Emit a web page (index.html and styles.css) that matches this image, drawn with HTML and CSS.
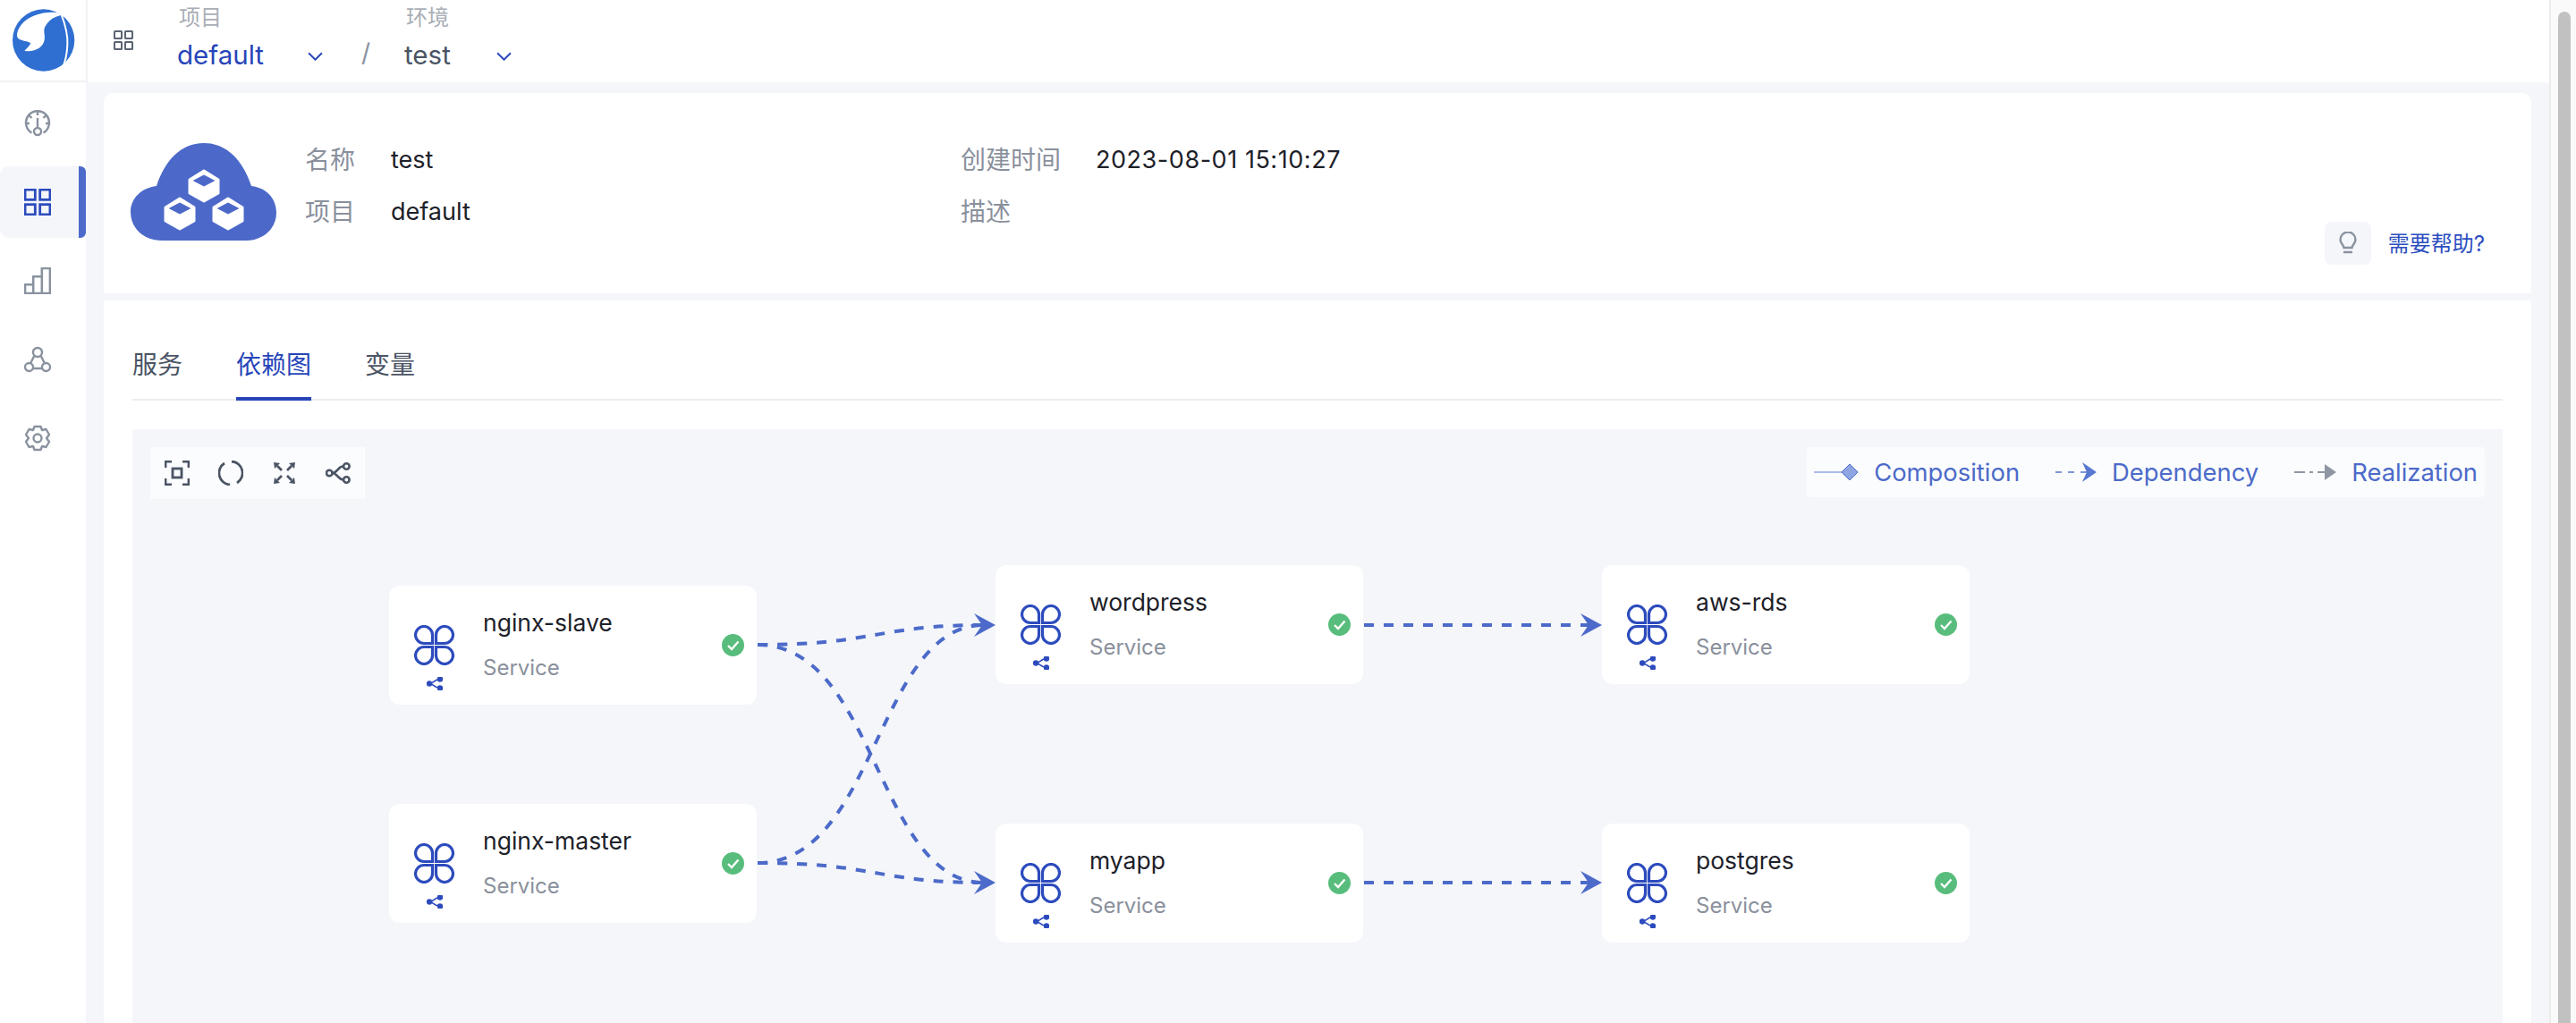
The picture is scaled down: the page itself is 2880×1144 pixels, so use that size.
FILE: index.html
```html
<!DOCTYPE html>
<html lang="zh-CN">
<head>
    <meta charset="UTF-8">
    <title>test</title>
    <link rel="stylesheet" href="styles.css">
</head>
<body>
    <svg class="icon-defs" width="0" height="0">
        <defs>
            <symbol id="icon-apps" viewBox="0 0 22 22">
                <rect x="1" y="1" width="8" height="8" rx="0.5"/>
                <rect x="13" y="1" width="8" height="8" rx="0.5"/>
                <rect x="1" y="13" width="8" height="8" rx="0.5"/>
                <rect x="13" y="13" width="8" height="8" rx="0.5"/>
            </symbol>
            <symbol id="icon-clover" viewBox="0 0 45 45">
                <path d="M20.500 20.500H11A9.500 9.500 0 1 1 20.500 11Z"/>
                <path d="M24.500 20.500H34A9.500 9.500 0 1 0 24.500 11Z"/>
                <path d="M20.500 24.500H11A9.500 9.500 0 1 0 20.500 34Z"/>
                <path d="M24.500 24.500H34A9.500 9.500 0 1 1 24.500 34Z"/>
            </symbol>
            <symbol id="icon-tree" viewBox="0 0 18 15">
                <path d="M3 7.500C8 7.500 8 2.500 15 2.500M3 7.500C8 7.500 8 12.500 15 12.500"/>
                <circle cx="3" cy="7.500" r="2.500"/>
                <circle cx="15" cy="2.500" r="2.500"/>
                <circle cx="15" cy="12.500" r="2.500"/>
            </symbol>
            <symbol id="icon-ok" viewBox="0 0 25 25">
                <circle cx="12.500" cy="12.500" r="12.500" fill="#58bd7c"/>
                <path d="M7 13l4 4 7.500-8.500" fill="none" stroke="#fff" stroke-width="2.400"/>
            </symbol>
            <symbol id="icon-cube" viewBox="0 0 36 38">
                <path class="cube-body" d="M18 2L34 12V27L18 36L2 27V12Z"/>
                <path class="cube-top" d="M18 7L29.500 13L18 19L6.500 13Z"/>
            </symbol>
        </defs>
    </svg>

    <div class="app">
        <aside class="sidebar">
            <div class="logo">
                <svg width="96" height="92" viewBox="0 0 288 276">
                    <circle cx="146" cy="135" r="104" fill="#2f6fd2"/>
                    <path d="M190 42C150 38 95 50 70 85C58 102 52 122 62 130C75 138 92 138 103 145C98 155 90 163 82 170C105 176 135 168 147 142C155 120 142 105 152 88C160 74 172 62 188 56L207 50Z" fill="#fff"/>
                    <path d="M186 34L205 46C218 80 228 120 226 150C225 185 218 210 208 232" fill="none" stroke="#fff" stroke-width="6"/>
                </svg>
            </div>
            <nav class="nav">
                <a class="nav-item">
                    <svg class="nav-icon" viewBox="0 0 30 30">
                        <path d="M8.500 25.500A13 13 0 1 1 21.500 25.500"/>
                        <path d="M15 2v4M15 9v10M2 15h4M24 15h4M5.500 6l3 3M24.500 6l-3 3"/>
                        <circle cx="15" cy="24" r="4"/>
                    </svg>
                </a>
                <a class="nav-item active">
                    <svg class="nav-icon" viewBox="0 0 28 28">
                        <rect x="1" y="1" width="10.500" height="10.500"/>
                        <rect x="16.500" y="1" width="10.500" height="10.500"/>
                        <rect x="1" y="16.500" width="10.500" height="10.500"/>
                        <rect x="16.500" y="16.500" width="10.500" height="10.500"/>
                    </svg>
                </a>
                <a class="nav-item">
                    <svg class="nav-icon" viewBox="0 0 28 28">
                        <path d="M1 27V18H9.500V27ZM9.500 27V9.500H18.500V27ZM18.500 27V1H27V27ZM1 27H27"/>
                    </svg>
                </a>
                <a class="nav-item">
                    <svg class="nav-icon" viewBox="0 0 30 28">
                        <circle cx="15" cy="6" r="5"/>
                        <circle cx="5.500" cy="22.500" r="4.500"/>
                        <circle cx="24.500" cy="22.500" r="4.500"/>
                        <path d="M11.500 9.500L7 18.500M18.500 9.500L23 18.500M10 24H20"/>
                    </svg>
                </a>
                <a class="nav-item">
                    <svg class="nav-icon round" viewBox="0 0 30 30">
                        <path d="M11.500 2H18.500L20 6L24.500 5L28 11L25 15L28 19L24.500 25L20 24L18.500 28H11.500L10 24L5.500 25L2 19L5 15L2 11L5.500 5L10 6Z"/>
                        <circle cx="15" cy="15" r="4.500"/>
                    </svg>
                </a>
            </nav>
        </aside>

        <div class="main">
            <header class="topbar">
                <svg class="apps-icon"><use href="#icon-apps"/></svg>
                <div class="picker picker-project">
                    <span class="picker-label">项目</span>
                    <div class="picker-value current">
                        <span>default</span>
                        <svg class="chevron" viewBox="0 0 16 9"><path d="M1 1l7 7 7-7"/></svg>
                    </div>
                </div>
                <span class="slash">/</span>
                <div class="picker picker-env">
                    <span class="picker-label">环境</span>
                    <div class="picker-value">
                        <span>test</span>
                        <svg class="chevron" viewBox="0 0 16 9"><path d="M1 1l7 7 7-7"/></svg>
                    </div>
                </div>
            </header>

            <div class="content">
                <section class="card info-card">
                    <svg class="env-logo" viewBox="6 10 164 110">
                        <path class="cloud" d="M42 119C20 119 6 105 6 87C6 72 18 60 35 58C44 30 62 10 88 10C114 10 132 30 141 58C158 60 169 72 169 88C169 105 155 119 135 119Z"/>
                        <use href="#icon-cube" x="70" y="39" width="36" height="38"/>
                        <use href="#icon-cube" x="43" y="70" width="36" height="38"/>
                        <use href="#icon-cube" x="97" y="70" width="36" height="38"/>
                    </svg>
                    <dl class="info-grid">
                        <dt>名称</dt><dd>test</dd>
                        <dt>创建时间</dt><dd class="date">2023-08-01 15:10:27</dd>
                        <dt>项目</dt><dd>default</dd>
                        <dt>描述</dt><dd></dd>
                    </dl>
                    <div class="help">
                        <span class="help-icon">
                            <svg width="20" height="26" viewBox="0 0 20 26">
                                <path d="M5.500 18C5 14.500 1.500 13 1.500 9A8.500 8.500 0 0 1 18.500 9C18.500 13 15 14.500 14.500 18Z"/>
                                <path d="M5 23H15"/>
                            </svg>
                        </span>
                        <a class="help-link">需要帮助?</a>
                    </div>
                </section>

                <section class="card detail-card">
                    <div class="tabs">
                        <a class="tab">服务</a>
                        <a class="tab active">依赖图</a>
                        <a class="tab">变量</a>
                    </div>

                    <div class="canvas">
                        <svg class="edges" viewBox="148 480 2650 664" width="2650" height="664">
                            <g class="edge-lines">
                                <path d="M847 721C980 721 980 699 1100 699"/>
                                <path d="M847 721C980 721 980 987 1100 987"/>
                                <path d="M847 965C980 965 980 699 1100 699"/>
                                <path d="M847 965C980 965 980 987 1100 987"/>
                                <path d="M1525 699H1778"/>
                                <path d="M1525 987H1778"/>
                            </g>
                            <g class="edge-arrows">
                                <path d="M1113 699L1089 686L1098 699L1089 712Z"/>
                                <path d="M1113 987L1089 974L1098 987L1089 1000Z"/>
                                <path d="M1791 699L1767 686L1776 699L1767 712Z"/>
                                <path d="M1791 987L1767 974L1776 987L1767 1000Z"/>
                            </g>
                        </svg>

                        <div class="toolbar">
                            <svg class="tool" viewBox="0 0 28 28">
                                <path d="M1 8V1H8M20 1H27V8M27 20V27H20M8 27H1V20"/>
                                <rect x="9" y="9" width="10" height="10"/>
                            </svg>
                            <svg class="tool" viewBox="0 0 28 28">
                                <path d="M7 3A13 13 0 0 0 13 27M15 1A13 13 0 0 1 21 25"/>
                            </svg>
                            <svg class="tool" viewBox="0 0 28 28">
                                <path d="M6 6L11 11M22 6L17 11M6 22L11 17M22 22L17 17"/>
                                <path class="tool-solid" d="M2 2L9 3L3 9ZM26 2L19 3L25 9ZM2 26L9 25L3 19ZM26 26L19 25L25 19Z"/>
                            </svg>
                            <svg class="tool" viewBox="0 0 30 26">
                                <path d="M8 13C14 13 15 5 21 5M8 13C14 13 15 21 21 21"/>
                                <circle cx="4.500" cy="13" r="3.500"/>
                                <circle cx="25" cy="5" r="3.500"/>
                                <circle cx="25" cy="21" r="3.500"/>
                            </svg>
                        </div>

                        <div class="legend">
                            <div class="legend-item">
                                <svg class="legend-mark" width="50" height="20" viewBox="0 0 50 20">
                                    <path d="M0 10H32" stroke="#8fa5e3" stroke-width="1.500"/>
                                    <path d="M31 10L40 1L49 10L40 19Z" fill="#8fa5e3" stroke="#4c6ac9"/>
                                </svg>
                                <span>Composition</span>
                            </div>
                            <div class="legend-item">
                                <svg class="legend-mark" width="46" height="24" viewBox="0 0 46 24">
                                    <path d="M0 12H36" stroke="#7f96dd" stroke-width="2" stroke-dasharray="7 7"/>
                                    <path d="M46 12L30 1L35 12L30 23Z" fill="#5a78d2"/>
                                </svg>
                                <span>Dependency</span>
                            </div>
                            <div class="legend-item">
                                <svg class="legend-mark" width="47" height="22" viewBox="0 0 47 22">
                                    <path d="M0 11H36" stroke="#8f96a3" stroke-width="2" stroke-dasharray="12 5 4 5"/>
                                    <path d="M47 11L34 2V20Z" fill="#8f96a3"/>
                                </svg>
                                <span>Realization</span>
                            </div>
                        </div>

                        <div class="node node-slave">
                            <div class="node-icons">
                                <svg class="clover"><use href="#icon-clover"/></svg>
                                <svg class="tree"><use href="#icon-tree"/></svg>
                            </div>
                            <div class="node-text"><b>nginx-slave</b><span>Service</span></div>
                            <svg class="status"><use href="#icon-ok"/></svg>
                        </div>
                        <div class="node node-master">
                            <div class="node-icons">
                                <svg class="clover"><use href="#icon-clover"/></svg>
                                <svg class="tree"><use href="#icon-tree"/></svg>
                            </div>
                            <div class="node-text"><b>nginx-master</b><span>Service</span></div>
                            <svg class="status"><use href="#icon-ok"/></svg>
                        </div>
                        <div class="node node-wordpress">
                            <div class="node-icons">
                                <svg class="clover"><use href="#icon-clover"/></svg>
                                <svg class="tree"><use href="#icon-tree"/></svg>
                            </div>
                            <div class="node-text"><b>wordpress</b><span>Service</span></div>
                            <svg class="status"><use href="#icon-ok"/></svg>
                        </div>
                        <div class="node node-myapp">
                            <div class="node-icons">
                                <svg class="clover"><use href="#icon-clover"/></svg>
                                <svg class="tree"><use href="#icon-tree"/></svg>
                            </div>
                            <div class="node-text"><b>myapp</b><span>Service</span></div>
                            <svg class="status"><use href="#icon-ok"/></svg>
                        </div>
                        <div class="node node-rds">
                            <div class="node-icons">
                                <svg class="clover"><use href="#icon-clover"/></svg>
                                <svg class="tree"><use href="#icon-tree"/></svg>
                            </div>
                            <div class="node-text"><b>aws-rds</b><span>Service</span></div>
                            <svg class="status"><use href="#icon-ok"/></svg>
                        </div>
                        <div class="node node-postgres">
                            <div class="node-icons">
                                <svg class="clover"><use href="#icon-clover"/></svg>
                                <svg class="tree"><use href="#icon-tree"/></svg>
                            </div>
                            <div class="node-text"><b>postgres</b><span>Service</span></div>
                            <svg class="status"><use href="#icon-ok"/></svg>
                        </div>
                    </div>
                </section>
            </div>
        </div>

        <div class="scrollbar"><div class="scroll-thumb"></div></div>
    </div>
</body>
</html>
```

FILE: styles.css
```css
* {
    box-sizing: border-box;
}
html, body {
    margin: 0;
    padding: 0;
    height: 100%;
    overflow: hidden;
}
body {
    font-family: Inter, "Noto Sans CJK SC", sans-serif;
    background-color: #f4f6fa;
    color: #1d2129;
}
.icon-defs {
    position: absolute;
}
.app {
    display: flex;
    height: 1144px;
    overflow: hidden;
}

/* sidebar */
.sidebar {
    width: 96px;
    flex-shrink: 0;
    background-color: white;
}
.logo {
    height: 92px;
    border-bottom: 2px solid #f1f2f5;
}
.logo svg {
    display: block;
}
.nav {
    display: flex;
    flex-direction: column;
    gap: 8px;
    padding-top: 6px;
}
.nav-item {
    display: flex;
    align-items: center;
    height: 80px;
    padding-left: 27px;
    border-radius: 10px 0 0 10px;
}
.nav-item.active {
    background-color: #f4f6fa;
    border-right: 8px solid #4c6ac9;
    border-top-right-radius: 6px;
    border-bottom-right-radius: 6px;
}
.nav-icon {
    width: 30px;
    height: 30px;
    fill: none;
    stroke: #8a929f;
    stroke-width: 2.400;
}
.nav-icon.round {
    stroke-linejoin: round;
}
.nav-item.active .nav-icon {
    stroke: #2c4bbd;
    stroke-width: 2.600;
}

/* top bar */
.main {
    flex: 1;
    display: flex;
    flex-direction: column;
    min-width: 0;
}
.topbar {
    display: flex;
    height: 92px;
    padding-left: 29px;
    align-items: flex-start;
    background-color: white;
    border-left: 2px solid #f1f2f5;
}
.apps-icon {
    width: 22px;
    height: 22px;
    margin-top: 34px;
    fill: none;
    stroke: #5b6473;
    stroke-width: 2;
}
.picker {
    display: flex;
    flex-direction: column;
}
.picker-project {
    width: 206px;
    margin-left: 49px;
}
.picker-env {
    width: 125px;
}
.picker-label {
    margin-left: 2px;
    font-size: 24px;
    line-height: 39px;
    color: #a9aeb6;
}
.picker-value {
    display: flex;
    align-items: center;
    justify-content: space-between;
    width: 120px;
    font-size: 29.500px;
    line-height: 44px;
    color: #4a5464;
}
.picker-project .picker-value {
    width: 163px;
}
.picker-value.current {
    color: #2745b9;
}
.chevron {
    width: 17px;
    height: 10px;
    margin-top: 3px;
    fill: none;
    stroke: #2745b9;
    stroke-width: 1.800;
}
.slash {
    width: 48px;
    margin-top: 42px;
    font-size: 28px;
    color: #8a929f;
}

/* cards */
.content {
    flex: 1;
    display: flex;
    flex-direction: column;
    gap: 8px;
    padding: 12px 20px 0;
    min-height: 0;
}
.card {
    background-color: white;
}
.info-card {
    position: relative;
    display: flex;
    height: 224px;
    padding: 56px 0 0 30px;
    border-radius: 10px 10px 0 0;
}
.env-logo {
    width: 164px;
    height: 110px;
}
.cloud {
    fill: #4c69c9;
}
.cube-body {
    fill: white;
    stroke: white;
    stroke-width: 3;
    stroke-linejoin: round;
}
.cube-top {
    fill: #4c69c9;
    stroke: #4c69c9;
    stroke-linejoin: round;
}
.info-grid {
    display: grid;
    grid-template-columns: 96px 637px 151px auto;
    grid-auto-rows: 58px;
    margin: 0 0 0 31px;
    padding-top: 1px;
    font-size: 28px;
    line-height: 36px;
}
.info-grid dt {
    color: #8a909c;
}
.info-grid dd {
    margin: 0;
    font-size: 27px;
    color: #1d2129;
}
.info-grid .date {
    letter-spacing: 0.550px;
}
.help {
    position: absolute;
    top: 144px;
    right: 52px;
    display: flex;
    align-items: center;
    gap: 19px;
}
.help-icon {
    display: flex;
    align-items: center;
    justify-content: center;
    width: 52px;
    height: 48px;
    background-color: #f4f6fa;
    border-radius: 8px;
}
.help-icon svg {
    fill: none;
    stroke: #8a929f;
    stroke-width: 2.400;
}
.help-link {
    margin-bottom: 4px;
    font-size: 24px;
    color: #2d4ec0;
}

/* tabs */
.detail-card {
    flex: 1;
    display: flex;
    flex-direction: column;
    padding: 0 32px;
    min-height: 0;
}
.tabs {
    display: flex;
    gap: 60px;
    height: 112px;
    padding-top: 52px;
    border-bottom: 2px solid #ebedf0;
}
.tab {
    height: 60px;
    font-size: 28px;
    line-height: 40px;
    color: #4a5464;
}
.tab.active {
    color: #2745b9;
    border-bottom: 4px solid #2745b9;
}

/* dependency graph */
.canvas {
    position: relative;
    flex: 1;
    margin-top: 32px;
    background-color: #f4f6fa;
    overflow: hidden;
}
.edges {
    position: absolute;
    top: 0;
    left: 0;
}
.edge-lines path {
    fill: none;
    stroke: #4c6ac9;
    stroke-width: 4;
    stroke-dasharray: 11 11;
}
.edge-arrows path {
    fill: #4c6ac9;
}
.toolbar {
    position: absolute;
    top: 20px;
    left: 20px;
    display: flex;
    gap: 32px;
    align-items: center;
    width: 240px;
    height: 58px;
    padding-left: 16px;
    background-color: #fbfcfd;
}
.tool {
    width: 28px;
    height: 28px;
    fill: none;
    stroke: #4a5464;
    stroke-width: 2.800;
}
.tool-solid {
    fill: #4a5464;
    stroke: none;
}
.legend {
    position: absolute;
    top: 20px;
    right: 20px;
    display: flex;
    gap: 40px;
    align-items: center;
    height: 56px;
    padding: 0 8px;
    background-color: #fbfcfd;
    border-radius: 4px;
    font-size: 27.400px;
    color: #4c6ac9;
}
.legend-item {
    display: flex;
    align-items: center;
    gap: 17px;
}
.legend-mark {
    flex-shrink: 0;
}

/* graph nodes, placed on the canvas */
.node {
    position: absolute;
    display: flex;
    align-items: center;
    width: 411px;
    height: 133px;
    padding-left: 28px;
    padding-right: 14px;
    background-color: white;
    border-radius: 12px;
}
.node-slave { left: 287px; top: 175px; }
.node-master { left: 287px; top: 419px; }
.node-wordpress { left: 965px; top: 152px; }
.node-myapp { left: 965px; top: 441px; }
.node-rds { left: 1643px; top: 152px; }
.node-postgres { left: 1643px; top: 441px; }
.node-icons {
    display: flex;
    flex-direction: column;
    align-items: center;
    align-self: flex-start;
    gap: 13px;
    width: 45px;
    padding-top: 44px;
}
.clover {
    width: 45px;
    height: 45px;
    fill: none;
    stroke: #2c4bbd;
    stroke-width: 3.200;
}
.tree {
    width: 18px;
    height: 15px;
    fill: #2c4bbd;
    stroke: #2c4bbd;
    stroke-width: 1.500;
}
.tree path {
    fill: none;
}
.node-text {
    display: flex;
    flex-direction: column;
    align-self: flex-start;
    gap: 15px;
    margin-left: 32px;
    padding-top: 23px;
}
.node-text b {
    font-size: 26.500px;
    font-weight: 400;
    line-height: 36px;
    color: #1d2129;
}
.node-text span {
    font-size: 24px;
    line-height: 36px;
    color: #8a909c;
}
.status {
    width: 25px;
    height: 25px;
    margin-left: auto;
}

/* page scrollbar */
.scrollbar {
    display: flex;
    width: 30px;
    flex-shrink: 0;
    padding: 13px 6px 0 8px;
    background-color: #fafafa;
    border-left: 2px solid #ebebeb;
}
.scroll-thumb {
    flex: 1;
    background-color: #c1c1c1;
    border-radius: 8px 8px 0 0;
}
```
